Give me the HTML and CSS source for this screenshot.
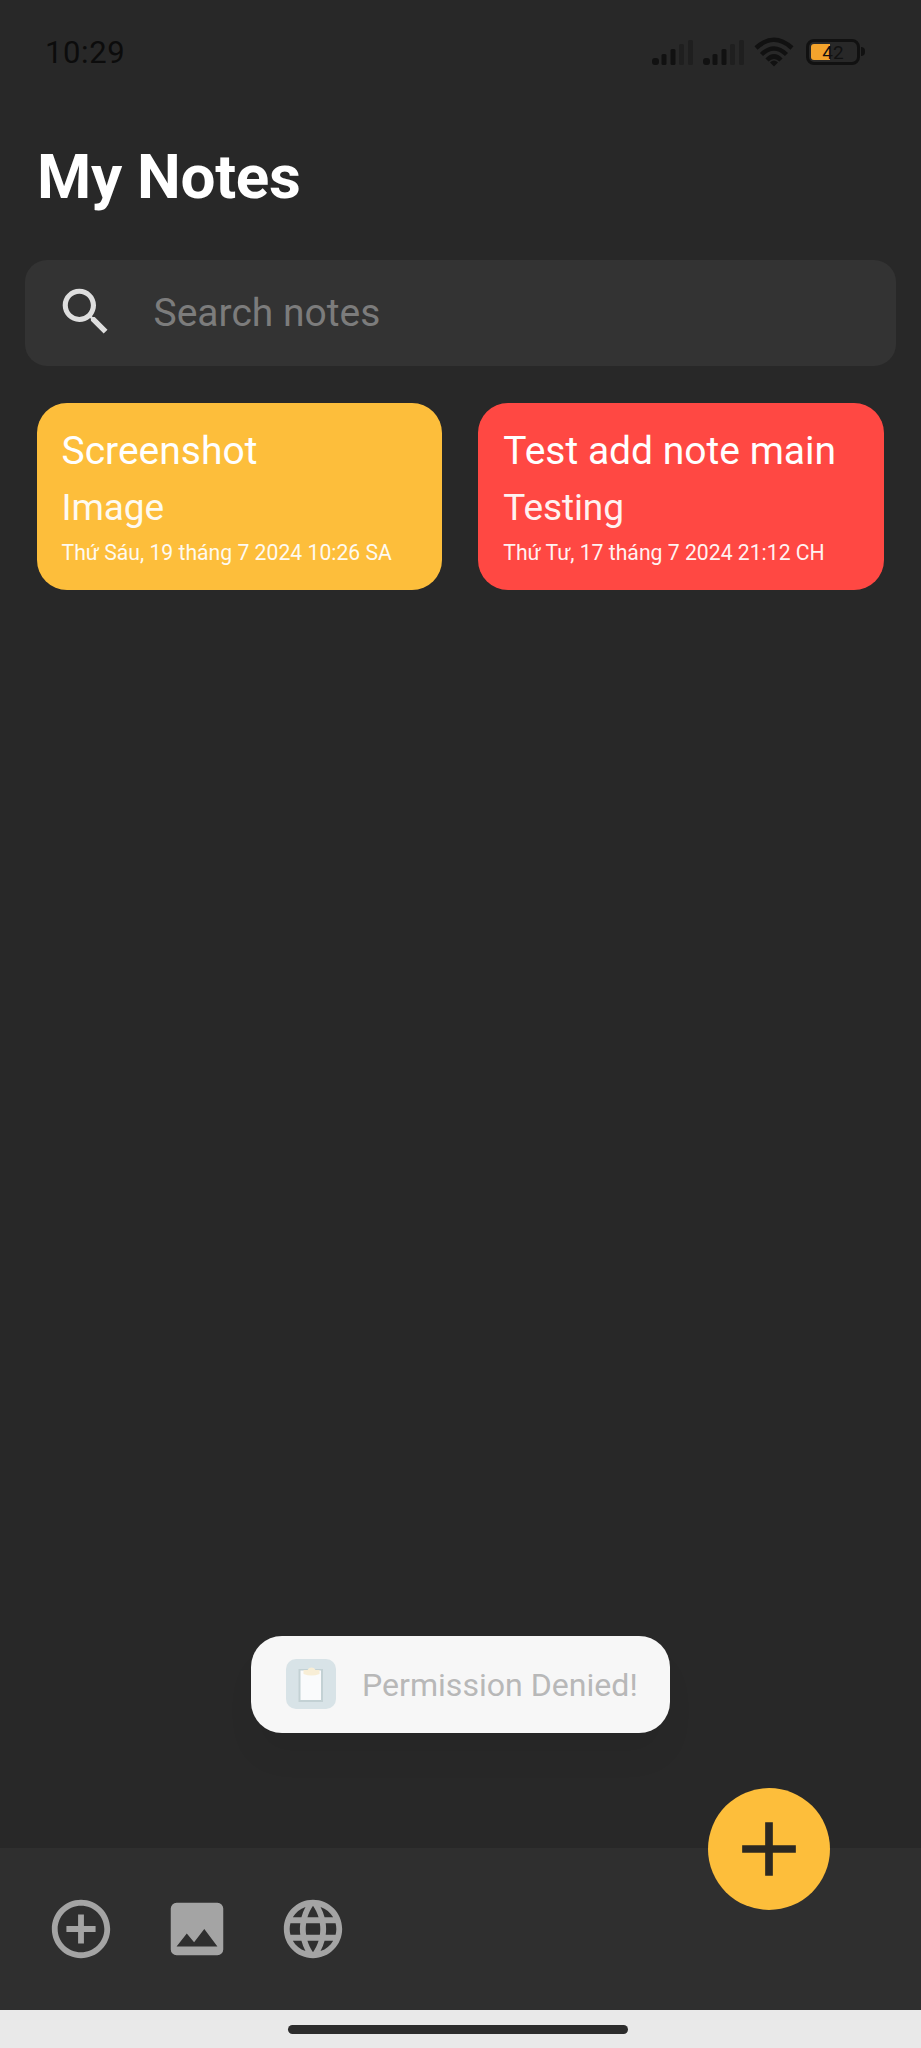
FILE: index.html
```html
<!DOCTYPE html>
<html lang="vi">
<head>
<meta charset="utf-8">
<title>My Notes</title>
<link rel="stylesheet" href="styles.css">
</head>
<body>
<div class="screen">
  <header class="status">
    <span class="clock">10:29</span>
    <div class="status-icons">
      <svg class="signal" viewBox="0 0 42 28"><g fill="#111"><rect x="0" y="20" width="7" height="7" rx="3"/><rect x="9.500" y="16" width="5" height="11" rx="1.500"/><rect x="18.500" y="11" width="5" height="16" rx="1.500"/></g><g fill="#1f1f1f"><rect x="27" y="6" width="5" height="21" rx="1.500"/><rect x="36" y="2" width="5" height="25" rx="1.500"/></g></svg>
      <svg class="signal" viewBox="0 0 42 28"><g fill="#111"><rect x="0" y="20" width="7" height="7" rx="3"/><rect x="9.500" y="16" width="5" height="11" rx="1.500"/><rect x="18.500" y="11" width="5" height="16" rx="1.500"/></g><g fill="#1f1f1f"><rect x="27" y="6" width="5" height="21" rx="1.500"/><rect x="36" y="2" width="5" height="25" rx="1.500"/></g></svg>
      <svg class="wifi" viewBox="0 0 40 30" fill="none" stroke="#111" stroke-width="4.500"><path d="M2 11Q20-5.500 38 11M7.500 17.500Q20 5.500 32.500 17.500M13 23Q20 16 27 23"/><path d="M16 25.500Q20 21.500 24 25.500L20 29.500z" fill="#111" stroke="none"/></svg>
      <div class="battery"><span class="battery-body"><span class="battery-fill"></span><span class="battery-text">42</span></span><span class="battery-tip"></span></div>
    </div>
  </header>
  <h1 class="title">My Notes</h1>
  <div class="search">
    <svg class="search-icon" viewBox="0 0 24 24" fill="#dedede"><path d="M15.500 14h-.79l-.28-.27C15.410 12.590 16 11.110 16 9.500 16 5.910 13.090 3 9.500 3S3 5.910 3 9.500 5.910 16 9.500 16c1.610 0 3.090-.59 4.230-1.570l.27.28v.79l5 4.990L20.490 19l-4.990-5zm-6 0C7.010 14 5 11.990 5 9.500S7.010 5 9.500 5 14 7.010 14 9.500 11.990 14 9.500 14z"/></svg>
    <span class="search-text">Search notes</span>
  </div>
  <main class="notes">
    <article class="note note-yellow"><h2 class="note-title">Screenshot</h2><p class="note-body">Image</p><p class="note-date">Thứ Sáu, 19 tháng 7 2024 10:26 SA</p></article>
    <article class="note note-red"><h2 class="note-title">Test add note main</h2><p class="note-body">Testing</p><p class="note-date">Thứ Tư, 17 tháng 7 2024 21:12 CH</p></article>
  </main>
  <footer class="toolbar">
    <svg class="tool" viewBox="0 0 24 24"><path d="M13 7h-2v4H7v2h4v4h2v-4h4v-2h-4V7zm-1-5C6.480 2 2 6.480 2 12s4.480 10 10 10 10-4.480 10-10S17.520 2 12 2zm0 18c-4.410 0-8-3.590-8-8s3.590-8 8-8 8 3.590 8 8-3.590 8-8 8z"/></svg>
    <svg class="tool" viewBox="0 0 24 24"><path fill-rule="evenodd" d="M5 3h14a2 2 0 0 1 2 2v14a2 2 0 0 1-2 2H5a2 2 0 0 1-2-2V5a2 2 0 0 1 2-2zM8.500 13.500L5 18h14l-4.500-6-3.500 4.510z"/></svg>
    <svg class="tool" viewBox="0 0 24 24"><path d="M11.990 2C6.470 2 2 6.480 2 12s4.470 10 9.990 10C17.520 22 22 17.520 22 12S17.520 2 11.990 2zm6.930 6h-2.950c-.32-1.250-.78-2.450-1.380-3.560 1.840.63 3.370 1.910 4.330 3.560zM12 4.040c.83 1.200 1.480 2.530 1.910 3.960h-3.820c.43-1.430 1.080-2.760 1.910-3.960zM4.260 14C4.100 13.360 4 12.690 4 12s.1-1.360.26-2h3.380c-.08.66-.14 1.320-.14 2s.06 1.340.14 2H4.260zm.82 2h2.950c.32 1.250.78 2.450 1.380 3.560-1.840-.63-3.370-1.900-4.330-3.560zm2.950-8H5.080c.96-1.660 2.490-2.930 4.330-3.560C8.810 5.550 8.350 6.750 8.030 8zM12 19.960c-.83-1.200-1.480-2.530-1.910-3.960h3.820c-.43 1.430-1.080 2.760-1.910 3.960zM14.340 14H9.660c-.09-.66-.16-1.320-.16-2s.07-1.350.16-2h4.680c.09.65.16 1.320.16 2s-.07 1.340-.16 2zm.25 5.560c.6-1.110 1.060-2.310 1.380-3.560h2.950c-.96 1.650-2.490 2.930-4.330 3.560zM16.360 14c.08-.66.14-1.320.14-2s-.06-1.340-.14-2h3.380c.16.640.26 1.310.26 2s-.1 1.360-.26 2h-3.380z"/></svg>
    <div class="fab"><svg class="fab-icon" viewBox="0 0 24 24"><path d="M19 13h-6v6h-2v-6H5v-2h6V5h2v6h6v2z"/></svg></div>
  </footer>
  <div class="navbar"><span class="handle"></span></div>
  <div class="toast">
    <svg class="toast-icon" viewBox="0 0 50 50"><rect width="50" height="50" rx="10" fill="#d8e3e7"/><rect x="12.500" y="10" width="24.500" height="33" fill="#c3d1d4"/><rect x="14.500" y="11.500" width="20.500" height="29.500" fill="#fafbfc"/><path d="M17.500 15v-4h4a4.500 4.500 0 0 1 8 0h4v4q-8 3-16 0z" fill="#f8eed6"/></svg>
    <span class="toast-text">Permission Denied!</span>
  </div>
</div>
</body>
</html>
```

FILE: styles.css
```css
body { margin: 0; background: #282828; font-family: Roboto, "Noto Sans", sans-serif; }
.screen { position: relative; display: flex; flex-direction: column; width: 921px; height: 2048px; overflow: hidden; background: #282828; }
.status { display: flex; justify-content: space-between; align-items: center; box-sizing: border-box; height: 106px; padding: 0 56px 0 45px; }
.clock { font-size: 31px; font-weight: 400; line-height: 40px; letter-spacing: .6px; color: #0c0c0c; }
.status-icons { display: flex; align-items: center; gap: 9px; padding-bottom: 3px; }
.signal { width: 42px; height: 28px; }
.wifi { width: 40px; height: 30px; }
.battery { display: flex; align-items: center; gap: 1px; margin-left: 3px; }
.battery-body { position: relative; box-sizing: border-box; width: 54px; height: 26px; padding: 2px; border: 3px solid #111; border-radius: 8px; }
.battery-fill { display: block; width: 19px; height: 16px; border-radius: 3px 0 0 3px; background: #f3a32c; }
.battery-text { position: absolute; inset: 0; font-size: 19px; line-height: 21px; text-align: center; color: #111; }
.battery-tip { width: 4px; height: 9px; border-radius: 0 4px 4px 0; background: #111; }
.title { margin: 31px 0 0 37px; font-size: 62px; font-weight: 700; line-height: 80px; letter-spacing: -.3px; color: #fff; }
.search { display: flex; align-items: center; gap: 37px; box-sizing: border-box; height: 106px; margin: 43px 25px 0; padding-left: 30px; border-radius: 22px; background: #333; }
.search-icon { width: 61.500px; height: 61.500px; margin-top: -2px; }
.search-text { font-size: 39px; line-height: 46px; color: #7c7c7c; }
.notes { display: grid; grid-template-columns: 1fr 1fr; gap: 36.500px; padding: 37px 37.500px 0 36.500px; }
.note { box-sizing: border-box; height: 187px; padding: 25px 0 0 25px; border-radius: 30px; color: #fff; white-space: nowrap; }
.note-yellow { background: #fdbe3b; }
.note-red { background: #ff4843; }
.note-title { margin: 0; font-size: 39px; font-weight: 400; line-height: 47px; }
.note-body { margin: 11px 0 0; font-size: 37px; line-height: 44px; letter-spacing: -.1px; opacity: .93; }
.note-date { margin: 10px 0 0; font-size: 21.200px; line-height: 26px; opacity: .93; }
.toolbar { position: relative; display: flex; align-items: center; gap: 46px; box-sizing: border-box; height: 162px; margin-top: auto; padding-left: 46px; background: #2f2f2f; }
.tool { width: 70px; height: 70px; fill: #a4a4a4; }
.fab { position: absolute; left: 708px; top: -60px; display: flex; align-items: center; justify-content: center; width: 122px; height: 122px; border-radius: 50%; background: #fdbe3b; }
.fab-icon { width: 92px; height: 92px; fill: #2b2822; }
.navbar { display: flex; align-items: center; justify-content: center; height: 38px; background: #e9e9e9; }
.handle { width: 340px; height: 9px; margin-right: 6px; border-radius: 5px; background: #2c2c2c; }
.toast { position: absolute; left: 251px; top: 1635.500px; display: flex; align-items: center; gap: 26px; box-sizing: border-box; width: 419px; height: 97px; padding-left: 35px; border-radius: 31px; background: #f7f7f7; box-shadow: 0 26px 30px rgba(0, 0, 0, .04); }
.toast-icon { width: 50px; height: 50px; }
.toast-text { padding-top: 2px; font-size: 32.100px; line-height: 40px; color: #b8b8b8; white-space: nowrap; }
```
